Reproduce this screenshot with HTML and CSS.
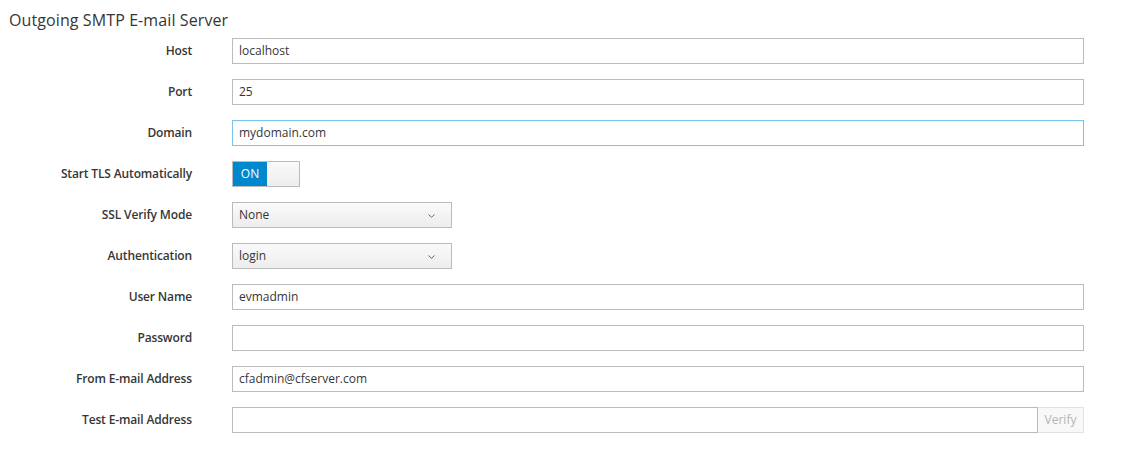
FILE: index.html
```html
<!DOCTYPE html>
<html>
<head>
<meta charset="utf-8">
<link rel="stylesheet" href="styles.css">
</head>
<body>
<div class="page">
  <h3 class="title">Outgoing SMTP E-mail Server</h3>
  <form class="form">
    <label class="lbl">Host</label>
    <div class="ctl"><div class="input">localhost</div></div>

    <label class="lbl">Port</label>
    <div class="ctl"><div class="input">25</div></div>

    <label class="lbl">Domain</label>
    <div class="ctl"><div class="input focus">mydomain.com</div></div>

    <label class="lbl">Start TLS Automatically</label>
    <div class="ctl"><div class="toggle"><span class="on">ON</span><span class="off"></span></div></div>

    <label class="lbl">SSL Verify Mode</label>
    <div class="ctl"><div class="select"><span>None</span><svg class="caret" width="7" height="4" viewBox="0 0 7 4"><path d="M0.5 0.5 L3.5 3.3 L6.5 0.5" fill="none" stroke="#666" stroke-width="1"/></svg></div></div>

    <label class="lbl">Authentication</label>
    <div class="ctl"><div class="select"><span>login</span><svg class="caret" width="7" height="4" viewBox="0 0 7 4"><path d="M0.5 0.5 L3.5 3.3 L6.5 0.5" fill="none" stroke="#666" stroke-width="1"/></svg></div></div>

    <label class="lbl">User Name</label>
    <div class="ctl"><div class="input">evmadmin</div></div>

    <label class="lbl">Password</label>
    <div class="ctl"><div class="input"></div></div>

    <label class="lbl">From E-mail Address</label>
    <div class="ctl"><div class="input">cfadmin@cfserver.com</div></div>

    <label class="lbl">Test E-mail Address</label>
    <div class="ctl group"><div class="input grow"></div><div class="verify">Verify</div></div>
  </form>
</div>
</body>
</html>
```
FILE: styles.css
```css
html, body {
  margin: 0;
  padding: 0;
  background: #fff;
}
body {
  font-family: "Open Sans", "Liberation Sans", sans-serif;
  color: #363636;
  font-size: 12px;
}
.page {
  padding: 10px 49px 0 9px;
}
.title {
  margin: 0;
  font-size: 16px;
  font-weight: 400;
  line-height: 20px;
  color: #363636;
  letter-spacing: 0.1px;
}
.form {
  display: grid;
  grid-template-columns: 183px 1fr;
  column-gap: 40px;
  row-gap: 15px;
  margin-top: 8px;
}
.lbl {
  text-align: right;
  font-weight: 600;
  font-size: 12px;
  letter-spacing: -0.15px;
  line-height: 26px;
  height: 26px;
  color: #363636;
}
.ctl {
  display: flex;
  height: 26px;
}
.input {
  box-sizing: border-box;
  width: 100%;
  height: 26px;
  border: 1px solid #bbb;
  padding: 0 6px;
  line-height: 24px;
  font-size: 12px;
  color: #363636;
  background: #fff;
}
.input.focus {
  border-color: #7dc3e8;
  box-shadow: inset 0 1px 1px rgba(3,3,3,0.05);
}
.input.grow {
  flex: 1;
  width: auto;
}
.verify {
  box-sizing: border-box;
  width: 46px;
  height: 26px;
  border: 1px solid #e3e3e3;
  border-left: 0;
  background: #f8f8f8;
  color: #b4b4b4;
  line-height: 24px;
  text-align: center;
  font-size: 12px;
}
.toggle {
  box-sizing: border-box;
  display: flex;
  width: 68px;
  height: 26px;
  border: 1px solid #bbb;
}
.toggle .on {
  width: 34px;
  background: #0088ce;
  color: #fff;
  text-align: center;
  line-height: 24px;
  font-size: 12px;
}
.toggle .off {
  flex: 1;
  background: linear-gradient(#fafafa, #ededed);
}
.select {
  box-sizing: border-box;
  width: 220px;
  height: 26px;
  border: 1px solid #bbb;
  background: linear-gradient(#fafafa, #ededed);
  display: flex;
  align-items: center;
  justify-content: space-between;
  padding: 0 16px 0 6px;
  line-height: 24px;
  color: #363636;
}
.caret {
  display: block;
  margin-top: 1px;
}
```
